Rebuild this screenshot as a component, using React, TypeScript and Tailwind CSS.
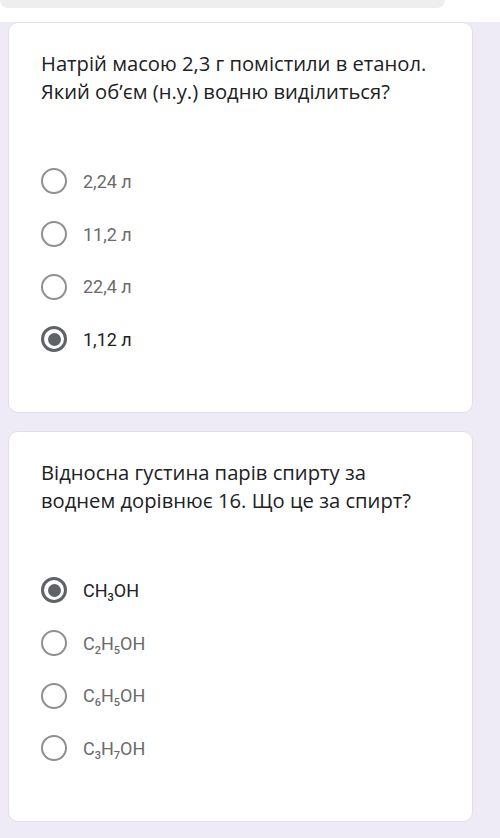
import React from "react";

type Opt = { label: React.ReactNode; selected?: boolean };

function Radio({ selected }: { selected?: boolean }) {
  return selected ? (
    <div className="w-[26px] h-[26px] rounded-full border-[3px] border-[#5f6368] flex items-center justify-center shrink-0">
      <div className="w-[13px] h-[13px] rounded-full bg-[#5f6368]" />
    </div>
  ) : (
    <div className="w-[26px] h-[26px] rounded-full border-[2.5px] border-[#8f8f8f] shrink-0" />
  );
}

function Sub({ children }: { children: React.ReactNode }) {
  return <span className="text-[11px] font-medium relative top-[4px]">{children}</span>;
}

function Card({ q1, q2, options }: { q1: string; q2: string; options: Opt[] }) {
  return (
    <div className="ml-[8px] w-[465px] h-[391px] bg-white rounded-[10px] border border-[#e2dfea] pt-[26px] pl-[32px]">
      <div className="text-[20.2px] leading-[28px] text-[#202124] font-['Open_Sans',sans-serif]">
        <div>{q1}</div>
        <div>{q2}</div>
      </div>
      <div className="mt-[50px] flex flex-col">
        {options.map((o, i) => (
          <div key={i} className="h-[52.7px] flex items-center">
            <Radio selected={o.selected} />
            <span
              className={
                "ml-[16px] text-[18px] font-['Roboto',sans-serif] " +
                (o.selected ? "text-[#202124]" : "text-[#6b6b6b]")
              }
            >
              {o.label}
            </span>
          </div>
        ))}
      </div>
    </div>
  );
}

export default function App() {
  return (
    <div className="w-[500px] h-[838px] bg-[#eeebf7] overflow-hidden">
      <div className="h-[22px] bg-white">
        <div className="w-[445px] h-[8px] bg-[#eeeeee] rounded-br-[18px] rounded-bl-[18px]" />
      </div>
      <Card
        q1="Натрій масою 2,3 г помістили в етанол."
        q2="Який об’єм (н.у.) водню виділиться?"
        options={[
          { label: "2,24 л" },
          { label: "11,2 л" },
          { label: "22,4 л" },
          { label: "1,12 л", selected: true },
        ]}
      />
      <div className="h-[18px]" />
      <Card
        q1="Відносна густина парів спирту за"
        q2="воднем дорівнює 16. Що це за спирт?"
        options={[
          { label: <>CH<Sub>3</Sub>OH</>, selected: true },
          { label: <>C<Sub>2</Sub>H<Sub>5</Sub>OH</> },
          { label: <>C<Sub>6</Sub>H<Sub>5</Sub>OH</> },
          { label: <>C<Sub>3</Sub>H<Sub>7</Sub>OH</> },
        ]}
      />
    </div>
  );
}
